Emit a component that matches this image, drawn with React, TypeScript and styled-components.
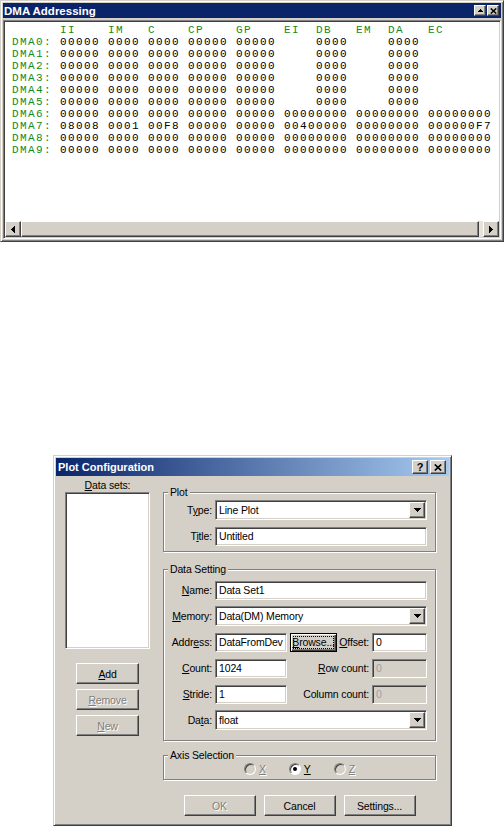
import styled, { createGlobalStyle, css } from "styled-components";

const GlobalStyle = createGlobalStyle`
  html, body {
    margin: 0;
    padding: 0;
    background: #fff;
  }
  body {
    width: 504px;
    height: 827px;
    overflow: hidden;
    font-family: "Liberation Sans", Arial, sans-serif;
    font-size: 11px;
  }
`;

const uiFont = css`
  font-family: "Liberation Sans", Arial, sans-serif;
  font-size: 10.5px;
  letter-spacing: -0.15px;
`;

const raised = css`
  border: 1px solid;
  border-color: #fff #404040 #404040 #fff;
  box-shadow: inset -1px -1px #808080, inset 1px 1px #d4d0c8;
`;

const sunken = css`
  border: 1px solid;
  border-color: #808080 #fff #fff #808080;
  box-shadow: inset 1px 1px #404040, inset -1px -1px #d4d0c8;
`;

const Page = styled.div`
  display: flex;
  flex-direction: column;
  align-items: flex-start;
`;

/* ---------- DMA window ---------- */

const DmaWindow = styled.div`
  width: 504px;
  height: 242px;
  box-sizing: border-box;
  background: #d4d0c8;
  border: 1px solid;
  border-color: #d4d0c8 #404040 #404040 #d4d0c8;
  box-shadow: inset 1px 1px #fff, inset -1px -1px #808080;
  padding: 2px;
  display: flex;
  flex-direction: column;
`;

const DmaTitleBar = styled.div`
  height: 15px;
  flex: none;
  background: #0a246a;
  color: #fff;
  display: flex;
  align-items: center;
  justify-content: space-between;
  padding: 0 2px 0 1px;
  font: bold 11.5px "Liberation Sans", Arial, sans-serif;
`;

const TitleButtons = styled.div`
  display: flex;
  gap: 1px;
`;

const SmallTitleButton = styled.span`
  ${raised}
  box-sizing: border-box;
  width: 12px;
  height: 11px;
  background: #d4d0c8;
  display: flex;
  align-items: center;
  justify-content: center;
`;

const DmaPanel = styled.div`
  ${sunken}
  margin-top: 2px;
  flex: 1;
  display: flex;
  flex-direction: column;
  padding: 1px;
  background: #fff;
`;

const DmaList = styled.div`
  flex: 1;
  padding: 2px 0 0 7px;
  font-family: "Liberation Mono", "Courier New", monospace;
  font-size: 11px;
  letter-spacing: 1.4px;
  line-height: 12px;
  white-space: pre;
  color: #000;
`;

const DmaLine = styled.div`
  height: 12px;
`;

const Green = styled.span`
  color: #168a16;
`;

const HScroll = styled.div`
  height: 16px;
  flex: none;
  display: flex;
  background: #e6e3dd;
`;

const ScrollArrow = styled.span`
  ${raised}
  box-sizing: border-box;
  width: 16px;
  height: 16px;
  background: #d4d0c8;
  display: flex;
  align-items: center;
  justify-content: center;
`;

const ScrollThumb = styled.span`
  ${raised}
  box-sizing: border-box;
  flex: 1;
  margin-right: 4px;
  background: #d4d0c8;
`;

/* ---------- Plot Configuration dialog ---------- */

const Dialog = styled.div`
  margin: 213px 0 0 53px;
  width: 399px;
  height: 371px;
  box-sizing: border-box;
  background: #d4d0c8;
  border: 1px solid;
  border-color: #d4d0c8 #404040 #404040 #d4d0c8;
  box-shadow: inset 1px 1px #fff, inset -1px -1px #808080;
  padding: 2px;
  display: flex;
  flex-direction: column;
`;

const DialogTitleBar = styled.div`
  height: 18px;
  flex: none;
  background: linear-gradient(to right, #0a246a, #a6caf0);
  color: #fff;
  display: flex;
  align-items: center;
  justify-content: space-between;
  padding: 0 3px 0 2px;
  font: bold 11px "Liberation Sans", Arial, sans-serif;
`;

const DialogTitleButtons = styled.div`
  display: flex;
  gap: 2px;
`;

const TitleButton = styled.span`
  ${raised}
  box-sizing: border-box;
  width: 16px;
  height: 14px;
  background: #d4d0c8;
  color: #000;
  display: flex;
  align-items: center;
  justify-content: center;
  font: bold 11px "Liberation Sans", Arial, sans-serif;
`;

const DialogBody = styled.div`
  ${uiFont}
  flex: 1;
  display: grid;
  grid-template-columns: 85px 273px;
  column-gap: 13px;
  align-items: start;
  padding-left: 9px;
  color: #000;
`;

const LeftColumn = styled.div`
  display: flex;
  flex-direction: column;
  align-items: center;
  padding-top: 3px;
`;

const ListCaption = styled.div`
  line-height: 13px;
`;

const ListBox = styled.div`
  ${sunken}
  box-sizing: border-box;
  width: 85px;
  height: 157px;
  background: #fff;
  margin-bottom: 14px;
`;

const SideButtons = styled.div`
  display: flex;
  flex-direction: column;
  gap: 5px;
`;

const RightColumn = styled.div`
  display: flex;
  flex-direction: column;
  padding-top: 10px;
`;

const Group = styled.fieldset<{ $pad: string; $gap?: number }>`
  margin: 0 0 ${(p) => p.$gap ?? 0}px;
  min-width: 0;
  width: 273px;
  box-sizing: border-box;
  padding: ${(p) => p.$pad};
  border: 1px solid #808080;
  box-shadow: 1px 1px 0 #fff, inset 1px 1px 0 #fff;
`;

const Legend = styled.legend`
  padding: 0 2px;
  margin-left: 4px;
  background: #d4d0c8;
  line-height: 13px;
`;

const FormGrid = styled.div`
  display: grid;
  grid-template-columns: 48px 72px 79px 55px;
  grid-auto-rows: 20px;
  column-gap: 3px;
  row-gap: 6px;
  align-items: center;
`;

const Label = styled.span`
  justify-self: end;
  white-space: nowrap;
`;

const Wide = styled.div`
  grid-column: 2 / 5;
`;

const MidCell = styled.div<{ $align: string }>`
  display: flex;
  align-items: center;
  justify-content: ${(p) => p.$align};
  white-space: nowrap;
`;

const Field = styled.div<{ $disabled?: boolean }>`
  ${sunken}
  box-sizing: border-box;
  height: 19px;
  padding: 0 3px;
  display: flex;
  align-items: center;
  overflow: hidden;
  white-space: nowrap;
  background: ${(p) => (p.$disabled ? "#d4d0c8" : "#fff")};
  color: ${(p) => (p.$disabled ? "#a0a0a0" : "#000")};
`;

const Combo = styled.div`
  ${sunken}
  box-sizing: border-box;
  height: 20px;
  padding: 1px;
  display: flex;
  align-items: center;
  background: #fff;
`;

const ComboText = styled.span`
  flex: 1;
  padding-left: 2px;
`;

const ComboButton = styled.span`
  ${raised}
  box-sizing: border-box;
  width: 16px;
  height: 16px;
  background: #d4d0c8;
  display: flex;
  align-items: center;
  justify-content: center;
`;

const Button = styled.button<{ $w: number; $h?: number; $focus?: boolean }>`
  ${raised}
  ${uiFont}
  box-sizing: border-box;
  width: ${(p) => p.$w}px;
  height: ${(p) => p.$h ?? 21}px;
  padding: 0;
  background: #d4d0c8;
  color: #000;
  white-space: nowrap;
  ${(p) =>
    p.$focus &&
    css`
      border-color: #000;
      box-shadow: inset 1px 1px #fff, inset -1px -1px #404040, inset -2px -2px #808080;
      outline: 1px dotted #000;
      outline-offset: -4px;
    `}
  &:disabled {
    color: #808080;
    text-shadow: 1px 1px #fff;
  }
`;

const ButtonRow = styled.div`
  margin-top: 15px;
  display: flex;
  justify-content: center;
  gap: 8px;
`;

const RadioRow = styled.div`
  height: 14px;
  display: flex;
  justify-content: center;
  align-items: center;
  gap: 23px;
`;

const RadioItem = styled.span<{ $disabled?: boolean }>`
  display: flex;
  align-items: center;
  gap: 3px;
  color: ${(p) => (p.$disabled ? "#808080" : "#000")};
  text-shadow: ${(p) => (p.$disabled ? "1px 1px #fff" : "none")};
`;

const RadioCircle = styled.span<{ $disabled?: boolean }>`
  box-sizing: border-box;
  width: 12px;
  height: 12px;
  border-radius: 50%;
  border: 1px solid;
  border-color: #808080 #fff #fff #808080;
  box-shadow: inset 1px 1px #404040;
  background: ${(p) => (p.$disabled ? "#d4d0c8" : "#fff")};
  display: flex;
  align-items: center;
  justify-content: center;
`;

const RadioDot = styled.span`
  width: 4px;
  height: 4px;
  border-radius: 50%;
  background: #000;
`;

const Key = styled.u`
  text-decoration: underline;
  text-underline-offset: 1px;
`;

/* ---------- glyphs ---------- */

const DownArrow = () => (
  <svg width="7" height="4" viewBox="0 0 7 4" shapeRendering="crispEdges">
    <path d="M0 0h7v1h-1v1h-1v1h-1v1h-1v-1h-1v-1h-1v-1h-1z" fill="#000" />
  </svg>
);

const LeftArrow = () => (
  <svg width="4" height="7" viewBox="0 0 4 7" shapeRendering="crispEdges">
    <path d="M3 0h1v7h-1v-1h-1v-1h-1v-1h-1v-1h1v-1h1v-1h1z" fill="#000" />
  </svg>
);

const RightArrow = () => (
  <svg width="4" height="7" viewBox="0 0 4 7" shapeRendering="crispEdges">
    <path d="M0 0h1v1h1v1h1v1h1v1h-1v1h-1v1h-1v1h-1z" fill="#000" />
  </svg>
);

const UpArrow = () => (
  <svg width="5" height="3" viewBox="0 0 5 3" shapeRendering="crispEdges">
    <path d="M2 0h1v1h1v1h1v1h-5v-1h1v-1h1z" fill="#000" />
  </svg>
);

const CloseGlyph = ({ size }: { size: number }) => (
  <svg width={size} height={size - 1} viewBox="0 0 8 7">
    <path d="M0.8 0.5l6.4 6M7.2 0.5l-6.4 6" stroke="#000" strokeWidth="1.7" />
  </svg>
);

/* ---------- data ---------- */

const DMA_COLUMNS: [string, number][] = [
  ["II", 6],
  ["IM", 12],
  ["C", 17],
  ["CP", 22],
  ["GP", 28],
  ["EI", 34],
  ["DB", 38],
  ["EM", 43],
  ["DA", 47],
  ["EC", 52],
];
const colAt: Record<string, number> = Object.fromEntries(DMA_COLUMNS);

const shortRow = { II: "00000", IM: "0000", C: "0000", CP: "00000", GP: "00000", DB: "0000", DA: "0000" };
const longRow = {
  II: "00000",
  IM: "0000",
  C: "0000",
  CP: "00000",
  GP: "00000",
  EI: "00000000",
  EM: "00000000",
  EC: "00000000",
};

const dmaRows: Record<string, string>[] = [
  shortRow,
  shortRow,
  shortRow,
  shortRow,
  shortRow,
  shortRow,
  longRow,
  { ...longRow, II: "08008", IM: "0001", C: "00F8", EI: "00400000", EC: "000000F7" },
  longRow,
  longRow,
];

function lineUp(cells: Record<string, string>) {
  let line = "";
  for (const [key, text] of Object.entries(cells)) {
    line = line.padEnd(colAt[key]) + text;
  }
  return line;
}

const headerLine = lineUp(Object.fromEntries(DMA_COLUMNS.map(([k]) => [k, k])));

export default function App() {
  return (
    <>
      <GlobalStyle />
      <Page>
        <DmaWindow>
          <DmaTitleBar>
            <span>DMA Addressing</span>
            <TitleButtons>
              <SmallTitleButton>
                <UpArrow />
              </SmallTitleButton>
              <SmallTitleButton>
                <CloseGlyph size={7} />
              </SmallTitleButton>
            </TitleButtons>
          </DmaTitleBar>
          <DmaPanel>
            <DmaList>
              <DmaLine>
                <Green>{headerLine}</Green>
              </DmaLine>
              {dmaRows.map((cells, i) => (
                <DmaLine key={i}>
                  <Green>{`DMA${i}:`}</Green>
                  {lineUp(cells).slice(5)}
                </DmaLine>
              ))}
            </DmaList>
            <HScroll>
              <ScrollArrow>
                <LeftArrow />
              </ScrollArrow>
              <ScrollThumb />
              <ScrollArrow>
                <RightArrow />
              </ScrollArrow>
            </HScroll>
          </DmaPanel>
        </DmaWindow>

        <Dialog>
          <DialogTitleBar>
            <span>Plot Configuration</span>
            <DialogTitleButtons>
              <TitleButton>?</TitleButton>
              <TitleButton>
                <CloseGlyph size={8} />
              </TitleButton>
            </DialogTitleButtons>
          </DialogTitleBar>

          <DialogBody>
            <LeftColumn>
              <ListCaption>
                <Key>D</Key>ata sets:
              </ListCaption>
              <ListBox />
              <SideButtons>
                <Button $w={63}>
                  <Key>A</Key>dd
                </Button>
                <Button $w={63} disabled>
                  <Key>R</Key>emove
                </Button>
                <Button $w={63} disabled>
                  <Key>N</Key>ew
                </Button>
              </SideButtons>
            </LeftColumn>

            <RightColumn>
              <Group $pad="1px 8px 5px 0" $gap={11}>
                <Legend>Plot</Legend>
                <FormGrid>
                  <Label>
                    T<Key>y</Key>pe:
                  </Label>
                  <Wide>
                    <Combo>
                      <ComboText>Line Plot</ComboText>
                      <ComboButton>
                        <DownArrow />
                      </ComboButton>
                    </Combo>
                  </Wide>
                  <Label>
                    T<Key>i</Key>tle:
                  </Label>
                  <Wide>
                    <Field>Untitled</Field>
                  </Wide>
                </FormGrid>
              </Group>

              <Group $pad="4px 8px 10px 0" $gap={8}>
                <Legend>Data Setting</Legend>
                <FormGrid>
                  <Label>
                    <Key>N</Key>ame:
                  </Label>
                  <Wide>
                    <Field>Data Set1</Field>
                  </Wide>

                  <Label>
                    <Key>M</Key>emory:
                  </Label>
                  <Wide>
                    <Combo>
                      <ComboText>Data(DM) Memory</ComboText>
                      <ComboButton>
                        <DownArrow />
                      </ComboButton>
                    </Combo>
                  </Wide>

                  <Label>
                    Addr<Key>e</Key>ss:
                  </Label>
                  <Field>DataFromDev</Field>
                  <MidCell $align="space-between">
                    <Button $w={47} $h={19} $focus>
                      <Key>B</Key>rowse...
                    </Button>
                    <span>
                      <Key>O</Key>ffset:
                    </span>
                  </MidCell>
                  <Field>0</Field>

                  <Label>
                    <Key>C</Key>ount:
                  </Label>
                  <Field>1024</Field>
                  <MidCell $align="flex-end">
                    <span>
                      <Key>R</Key>ow count:
                    </span>
                  </MidCell>
                  <Field $disabled>0</Field>

                  <Label>
                    <Key>S</Key>tride:
                  </Label>
                  <Field>1</Field>
                  <MidCell $align="flex-end">Column count:</MidCell>
                  <Field $disabled>0</Field>

                  <Label>
                    Da<Key>t</Key>a:
                  </Label>
                  <Wide>
                    <Combo>
                      <ComboText>float</ComboText>
                      <ComboButton>
                        <DownArrow />
                      </ComboButton>
                    </Combo>
                  </Wide>
                </FormGrid>
              </Group>

              <Group $pad="0 0 3px 0">
                <Legend>Axis Selection</Legend>
                <RadioRow>
                  <RadioItem $disabled>
                    <RadioCircle $disabled />
                    <Key>X</Key>
                  </RadioItem>
                  <RadioItem>
                    <RadioCircle>
                      <RadioDot />
                    </RadioCircle>
                    <Key>Y</Key>
                  </RadioItem>
                  <RadioItem $disabled>
                    <RadioCircle $disabled />
                    <Key>Z</Key>
                  </RadioItem>
                </RadioRow>
              </Group>

              <ButtonRow>
                <Button $w={72} disabled>
                  OK
                </Button>
                <Button $w={72}>Cancel</Button>
                <Button $w={72}>Settings...</Button>
              </ButtonRow>
            </RightColumn>
          </DialogBody>
        </Dialog>
      </Page>
    </>
  );
}
